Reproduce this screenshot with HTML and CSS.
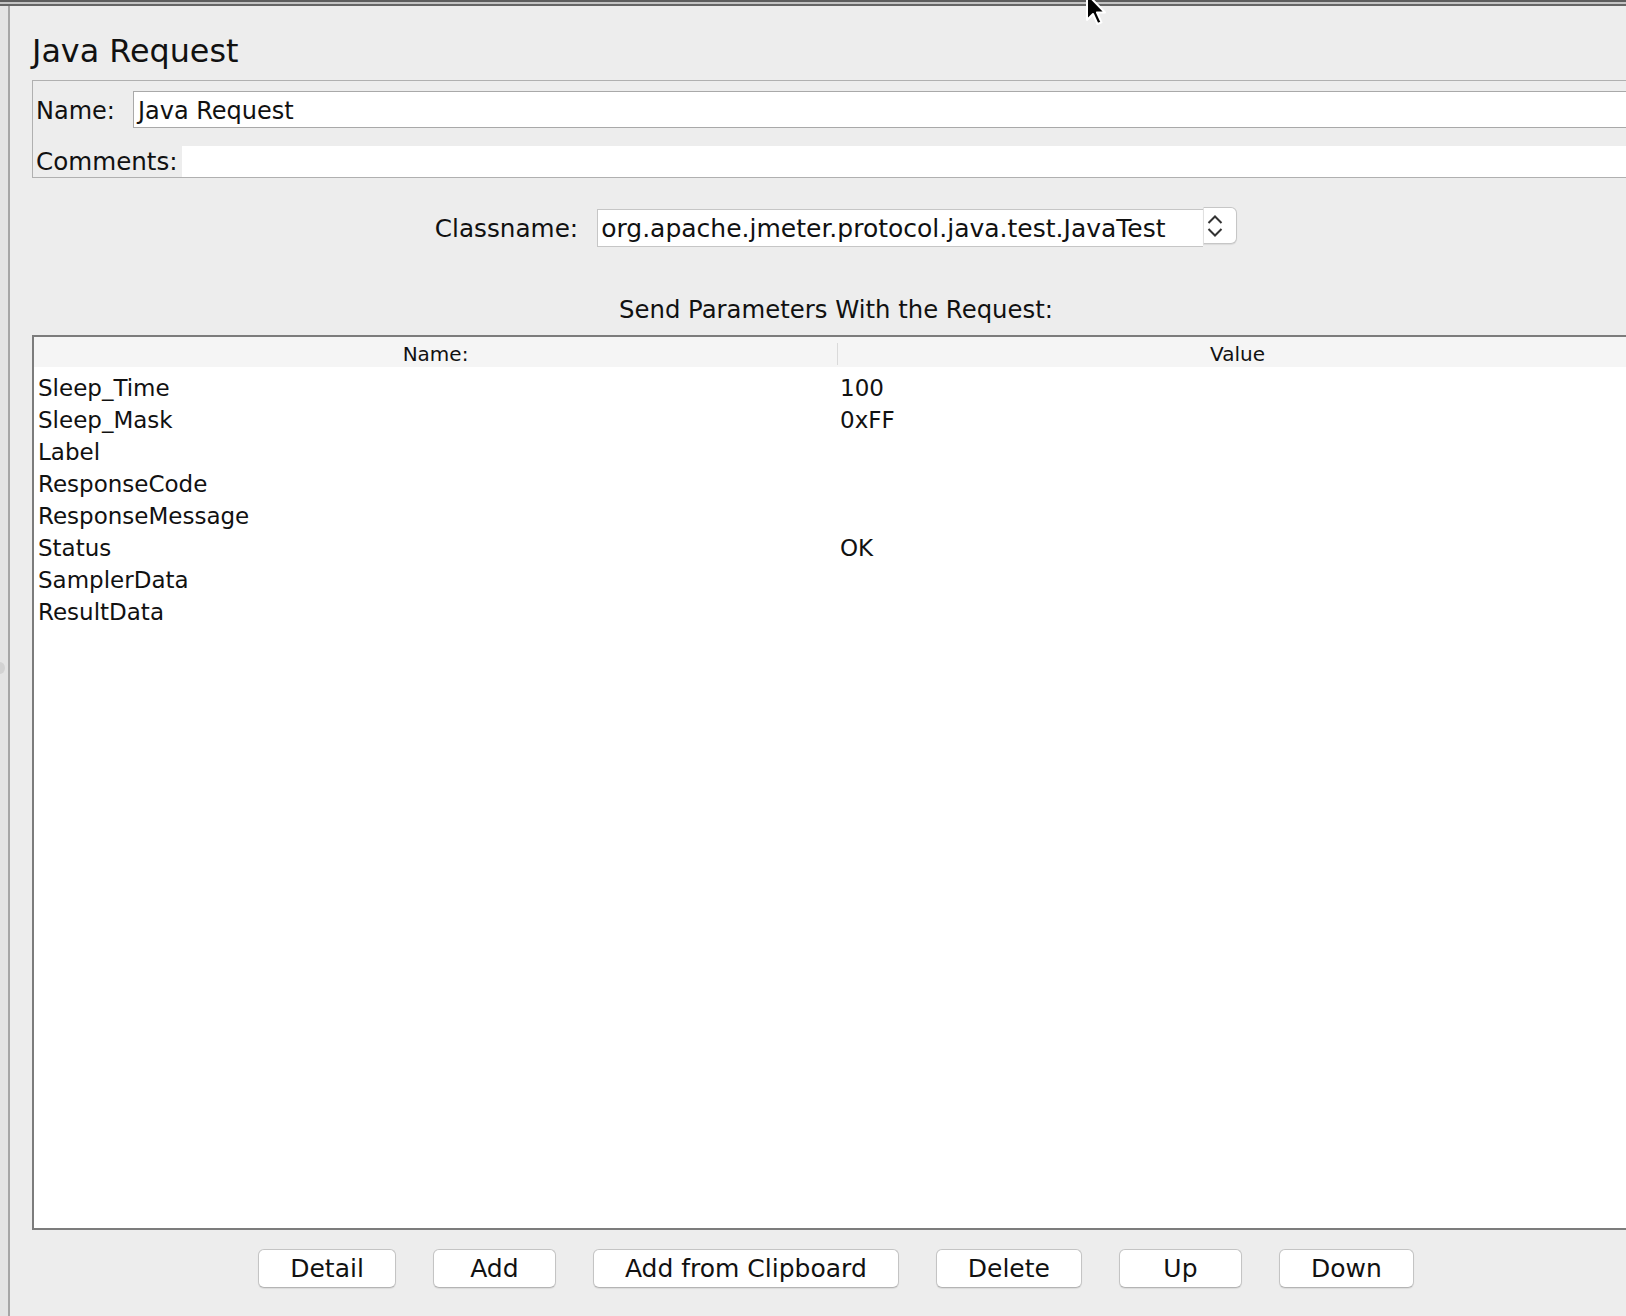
FILE: index.html
```html
<!DOCTYPE html>
<html lang="en">
<head>
    <meta charset="UTF-8">
    <title>Java Request</title>
    <link rel="stylesheet" href="styles.css">
</head>
<body>
    <div class="topbar"></div>
    <div class="workspace">
        <div class="edge"></div>
        <main class="panel">
            <h1 class="title">Java Request</h1>

            <div class="name-box">
                <div class="name-row">
                    <span class="label">Name:</span>
                    <div class="name-field">Java Request</div>
                </div>
                <div class="comment-row">
                    <span class="label comment-label">Comments:</span>
                    <div class="comment-field"></div>
                </div>
            </div>

            <div class="classname-row">
                <span class="label classname-label">Classname:</span>
                <div class="combo">
                    <div class="combo-value">org.apache.jmeter.protocol.java.test.JavaTest</div>
                    <div class="combo-arrow">
                        <svg width="16" height="22" viewBox="0 0 16 22">
                            <path d="M1.5 8 L8 1.5 L14.5 8" fill="none" stroke="#333" stroke-width="2"/>
                            <path d="M1.5 14 L8 20.5 L14.5 14" fill="none" stroke="#333" stroke-width="2"/>
                        </svg>
                    </div>
                </div>
            </div>

            <div class="params-caption">Send Parameters With the Request:</div>

            <div class="param-table">
                <div class="param-head">
                    <div class="head-cell">Name:</div>
                    <div class="head-cell head-value">Value</div>
                </div>
                <div class="param-body">
                    <div class="param-row"><span class="cell-name">Sleep_Time</span><span class="cell-value">100</span></div>
                    <div class="param-row"><span class="cell-name">Sleep_Mask</span><span class="cell-value">0xFF</span></div>
                    <div class="param-row"><span class="cell-name">Label</span><span class="cell-value"></span></div>
                    <div class="param-row"><span class="cell-name">ResponseCode</span><span class="cell-value"></span></div>
                    <div class="param-row"><span class="cell-name">ResponseMessage</span><span class="cell-value"></span></div>
                    <div class="param-row"><span class="cell-name">Status</span><span class="cell-value">OK</span></div>
                    <div class="param-row"><span class="cell-name">SamplerData</span><span class="cell-value"></span></div>
                    <div class="param-row"><span class="cell-name">ResultData</span><span class="cell-value"></span></div>
                </div>
            </div>

            <div class="button-bar">
                <button>Detail</button>
                <button>Add</button>
                <button>Add from Clipboard</button>
                <button>Delete</button>
                <button>Up</button>
                <button>Down</button>
            </div>
        </main>
    </div>

    <svg class="cursor" width="24" height="38" viewBox="0 0 24 38">
        <path d="M2 1 L2 27 L8 21 L12.5 31 L16.5 29.3 L12 19.5 L20 19.5 Z" fill="#000" stroke="#fff" stroke-width="2" stroke-linejoin="round"/>
    </svg>
</body>
</html>
```

FILE: styles.css
```css
body {
    margin: 0;
    background: #ededed;
    font-family: "DejaVu Sans", sans-serif;
    color: #111;
    overflow: hidden;
    height: 1316px;
}
.topbar {
    height: 2px;
    border-top: 2px solid #5d5d5d;
    border-bottom: 2px solid #666;
    background: #c4c4c4;
}
.workspace {
    display: flex;
    height: 1310px;
}
.edge {
    flex: none;
    width: 8px;
    background: #e4e4e4;
    border-right: 2px solid #a6a6a6;
    position: relative;
}
.edge::after {
    content: "";
    position: absolute;
    top: 656px;
    left: -5px;
    width: 10px;
    height: 12px;
    border-radius: 50%;
    background: #d2d2d2;
}
.panel {
    flex: none;
    width: 1608px;
    padding: 26px 0 0 22px;
}
.title {
    margin: 0;
    font-size: 31.8px;
    font-weight: normal;
    line-height: 38px;
}
.label {
    font-size: 24px;
    white-space: nowrap;
}
.name-box {
    margin-top: 10px;
    border: 1px solid #b0b0b0;
    padding: 10px 0 0 3px;
}
.name-row {
    display: flex;
    align-items: baseline;
}
.name-field {
    flex: 1;
    margin-left: 18px;
    height: 37px;
    box-sizing: border-box;
    border: 1px solid #a9a9a9;
    border-right: none;
    background: #fff;
    padding: 3px 0 0 4px;
    font-size: 24px;
    line-height: 32px;
}
.comment-row {
    display: flex;
    align-items: flex-end;
    margin-top: 18px;
}
.comment-label {
    font-size: 24.6px;
    line-height: 28px;
    margin-bottom: 1px;
}
.comment-field {
    flex: 1;
    height: 31px;
    margin-left: 4px;
    background: #fff;
}
.classname-row {
    margin-top: 31px;
    display: flex;
    justify-content: center;
    align-items: baseline;
    gap: 19px;
}
.classname-label {
    font-size: 24.7px;
}
.combo {
    display: flex;
    width: 640px;
    height: 38px;
}
.combo-value {
    flex: 1;
    box-sizing: border-box;
    border: 1px solid #c6c6c6;
    border-right: none;
    background: #fff;
    padding: 2px 0 0 3px;
    font-size: 25px;
    line-height: 34px;
    white-space: nowrap;
}
.combo-arrow {
    width: 34px;
    height: 37px;
    margin-top: -2px;
    box-sizing: border-box;
    border: 1px solid #c6c6c6;
    border-left: 1px solid #e0e0e0;
    border-radius: 0 6px 6px 0;
    background: #fff;
    box-shadow: 0 1px 1px rgba(0,0,0,0.08);
    display: flex;
    align-items: center;
    padding-left: 3px;
}
.params-caption {
    margin-top: 49px;
    text-align: center;
    font-size: 24.35px;
    line-height: 28px;
}
.param-table {
    margin-top: 11px;
    height: 895px;
    box-sizing: border-box;
    border: 2px solid #7c7c7c;
    background: #fff;
}
.param-head {
    display: grid;
    grid-template-columns: 803px 1fr;
    height: 30px;
    background: #f5f5f5;
}
.head-cell {
    text-align: center;
    font-size: 20px;
    line-height: 25px;
    padding-top: 5px;
}
.head-value {
    position: relative;
}
.head-value::before {
    content: "";
    position: absolute;
    left: 0;
    top: 6px;
    bottom: 2px;
    width: 1px;
    background: #dadada;
}
.param-body {
    padding-top: 5px;
}
.param-row {
    display: grid;
    grid-template-columns: 803px 1fr;
    height: 32px;
    font-size: 23px;
    line-height: 32px;
}
.cell-name {
    padding-left: 4px;
}
.cell-value {
    padding-left: 3px;
}
.button-bar {
    margin-top: 19px;
    display: flex;
    justify-content: center;
    gap: 37px;
}
button {
    min-width: 123px;
    height: 39px;
    padding: 0 31px;
    background: #fff;
    border: 1px solid #c4c4c4;
    border-bottom-color: #b4b4b4;
    border-radius: 6px;
    box-shadow: 0 1px 1px rgba(0,0,0,0.08);
    font-family: "DejaVu Sans", sans-serif;
    font-size: 25px;
    line-height: 37px;
    color: #111;
}
.cursor {
    position: absolute;
    left: 1085px;
    top: -7px;
}
```
